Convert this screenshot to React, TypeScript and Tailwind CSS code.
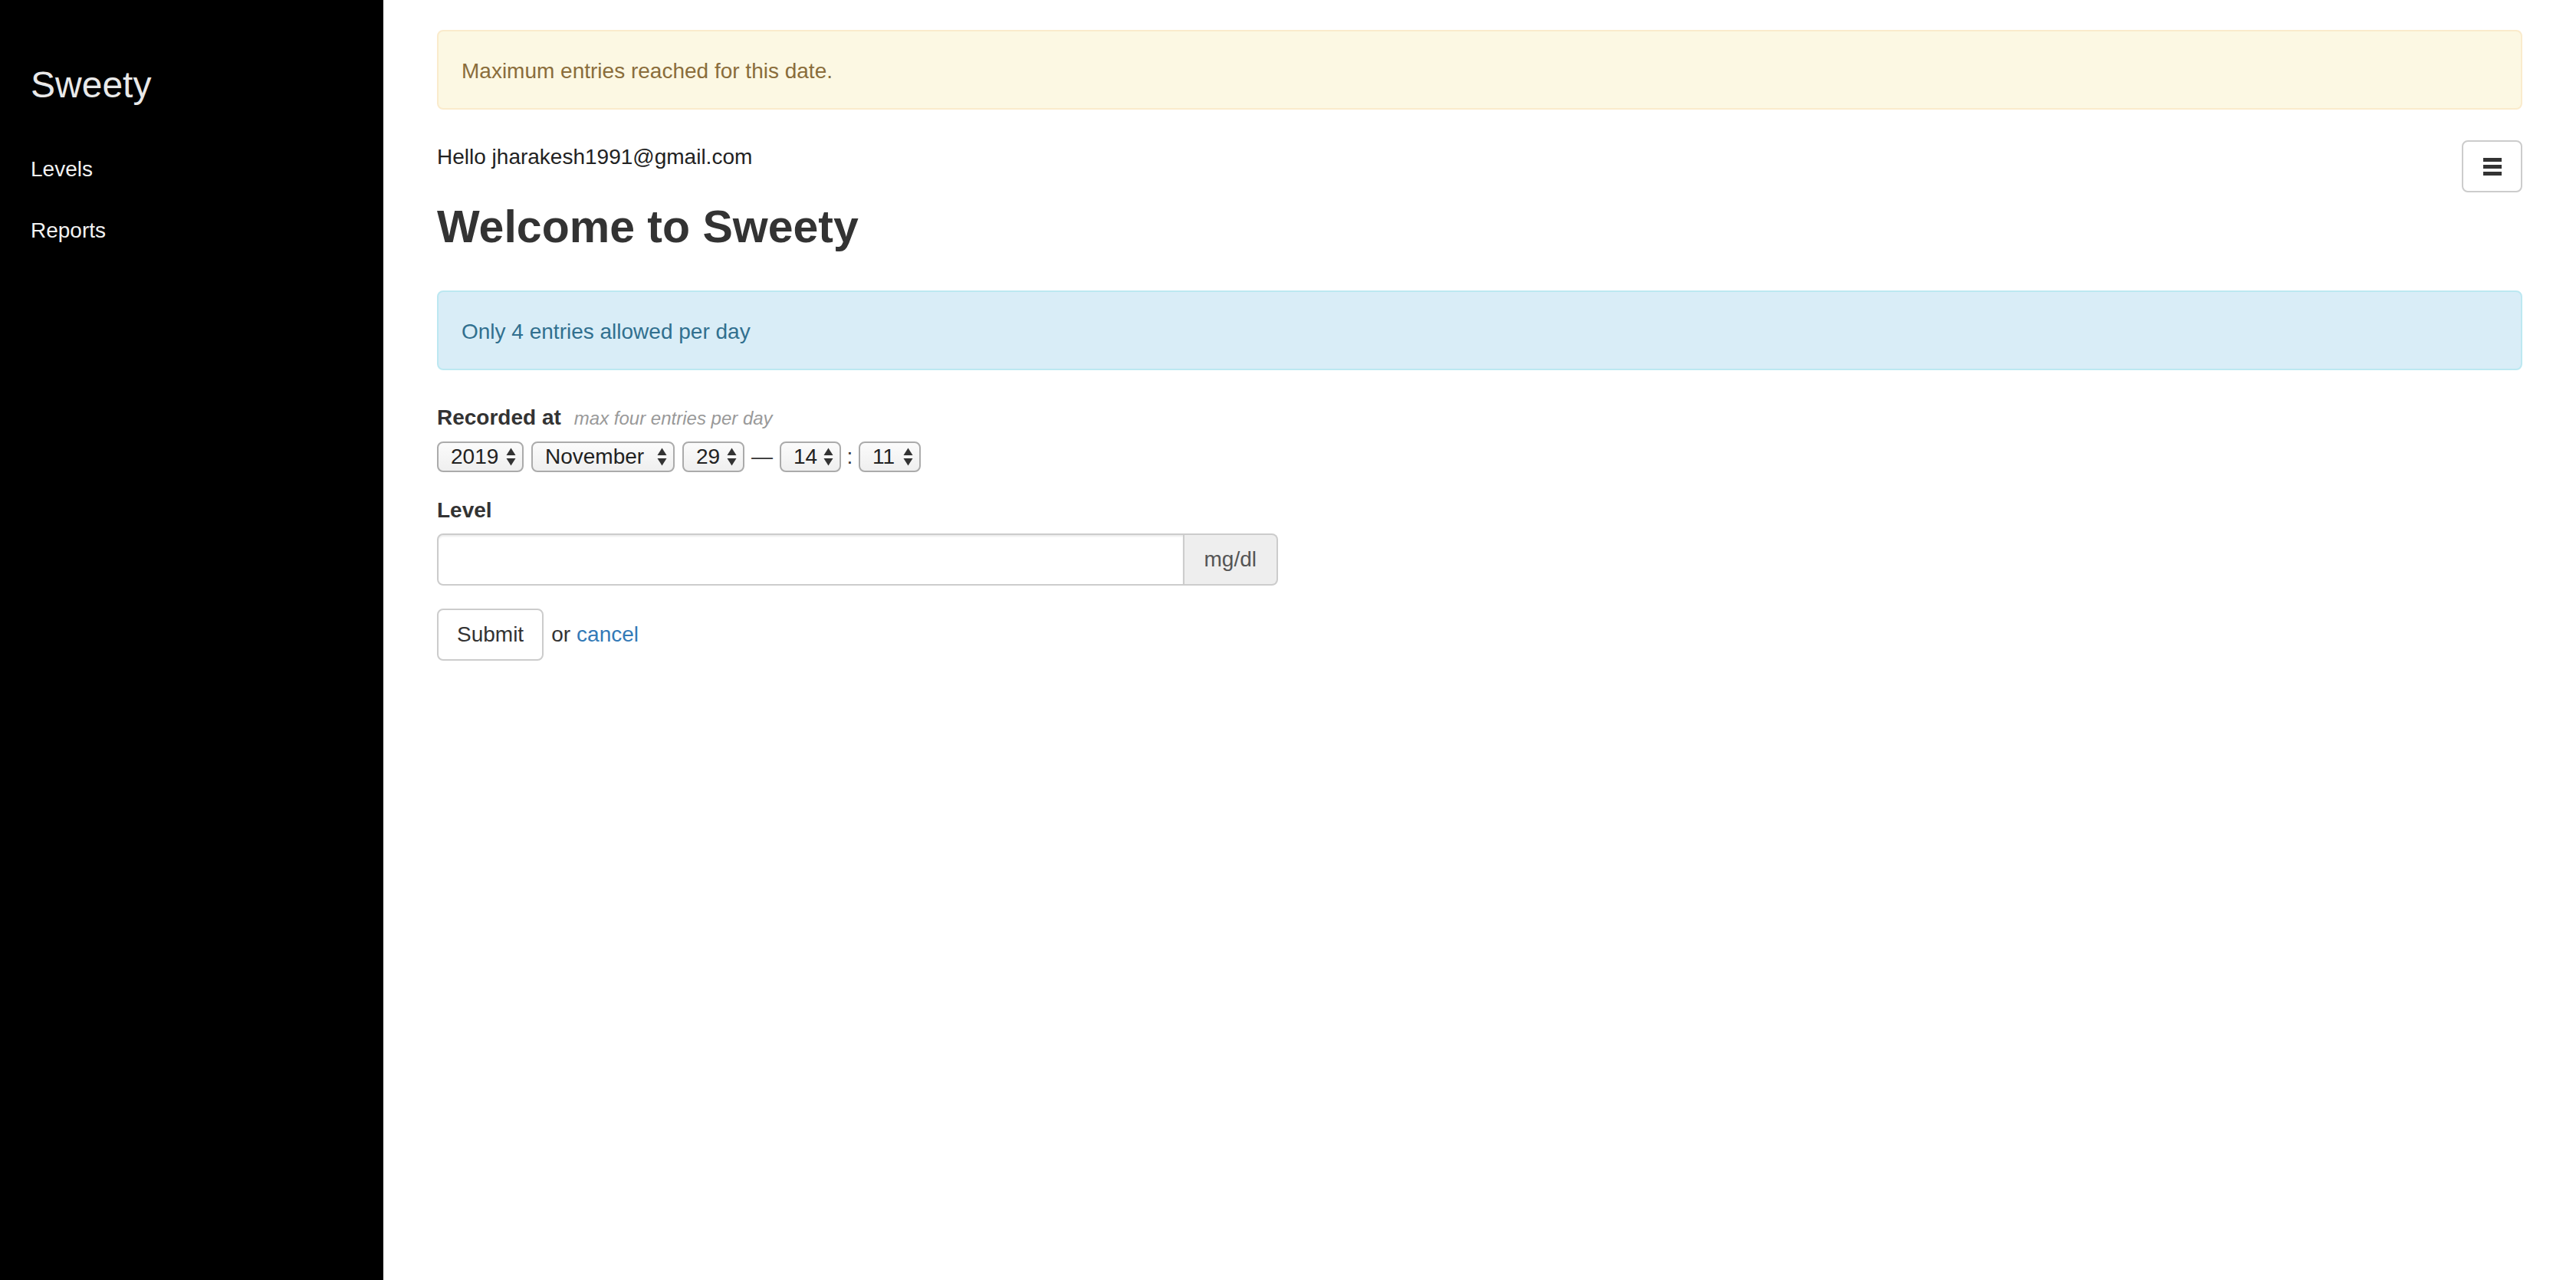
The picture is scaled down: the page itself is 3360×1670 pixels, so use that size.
import type { ReactNode } from 'react';

function Arrows() {
  return (
    <svg width="13" height="24" viewBox="0 0 13 24" className="shrink-0">
      <path d="M6.5 0.5 L12.5 10 L0.5 10 Z" fill="#333" />
      <path d="M0.5 14 L12.5 14 L6.5 23.5 Z" fill="#333" />
    </svg>
  );
}

function Picker({ value, className }: { value: string; className: string }) {
  return (
    <span
      className={`inline-flex h-[40px] shrink-0 items-center justify-between rounded-[8px] border-2 border-[#ababab] bg-gradient-to-b from-[#fbfbfb] to-[#efefef] pl-[16px] pr-[8px] text-[28px] leading-none text-[#222] ${className}`}
    >
      <span>{value}</span>
      <Arrows />
    </span>
  );
}

function Alert({ tone, children }: { tone: 'warning' | 'info'; children: ReactNode }) {
  const styles =
    tone === 'warning'
      ? 'border-[#faebcc] bg-[#fcf8e3] text-[#8a6d3b]'
      : 'border-[#bce8f1] bg-[#d9edf7] text-[#31708f]';
  return (
    <div className={`rounded-[8px] border-2 px-[30px] pb-[28px] pt-[32px] text-[28px] leading-[40px] ${styles}`}>
      {children}
    </div>
  );
}

export default function App() {
  return (
    <div className="flex h-screen font-['Liberation_Sans',Arial,sans-serif] text-[#333]">
      <aside className="w-[500px] shrink-0 bg-black px-[40px]">
        <div className="mt-[84px] text-[48px] leading-[54px] text-[#e9e9e9]">Sweety</div>
        <nav className="mt-[43px] flex flex-col">
          <a className="py-[20px] text-[28px] leading-[40px] text-[#f2f2f2]">Levels</a>
          <a className="py-[20px] text-[28px] leading-[40px] text-[#f2f2f2]">Reports</a>
        </nav>
      </aside>

      <main className="flex-1 px-[70px] pt-[39px]">
        <Alert tone="warning">Maximum entries reached for this date.</Alert>

        <div className="mt-[40px] flex items-start justify-between">
          <p className="pt-[2px] text-[28px] leading-[40px] text-[#222]">Hello jharakesh1991@gmail.com</p>
          <button
            type="button"
            className="flex h-[68px] w-[79px] flex-col items-center justify-center gap-[4px] rounded-[8px] border-2 border-[#ccc] bg-white"
            title="Menu"
          >
            <span className="h-[5px] w-[24px] bg-[#333]" />
            <span className="h-[5px] w-[24px] bg-[#333]" />
            <span className="h-[5px] w-[24px] bg-[#333]" />
          </button>
        </div>

        <h2 className="mt-[12px] text-[59px] font-bold leading-[66px] text-[#333]">Welcome to Sweety</h2>

        <div className="mt-[50px]">
          <Alert tone="info">Only 4 entries allowed per day</Alert>
        </div>

        <form className="mt-[42px]">
          <div className="mb-[30px]">
            <label className="block text-[28px] leading-[40px]">
              <span className="font-bold">Recorded at</span>
              <small className="ml-[17px] text-[24px] italic text-[#999]">max four entries per day</small>
            </label>
            <div className="mt-[10px] flex items-center">
              <Picker value="2019" className="w-[113px]" />
              <Picker value="November" className="ml-[10px] w-[187px]" />
              <Picker value="29" className="ml-[10px] w-[81px]" />
              <span className="w-[46px] text-center text-[28px] leading-none">—</span>
              <Picker value="14" className="w-[80px]" />
              <span className="w-[23px] text-center text-[28px] leading-none">:</span>
              <Picker value="11" className="w-[81px]" />
            </div>
          </div>

          <div className="mb-[30px]">
            <label className="block text-[28px] font-bold leading-[40px]">Level</label>
            <div className="mt-[10px] flex h-[68px] w-[1097px]">
              <input
                type="text"
                className="h-full flex-1 rounded-l-[8px] border-2 border-[#ccc] px-[24px] text-[28px] shadow-[inset_0_2px_2px_rgba(0,0,0,0.075)] outline-none"
              />
              <span className="flex h-full items-center rounded-r-[8px] border-2 border-l-0 border-[#ccc] bg-[#eee] px-[26px] text-[28px] text-[#555]">
                mg/dl
              </span>
            </div>
          </div>

          <div className="flex items-center text-[28px] leading-[40px]">
            <button
              type="button"
              className="h-[68px] rounded-[8px] border-2 border-[#ccc] bg-white px-[24px] text-[28px] text-[#333]"
            >
              Submit
            </button>
            <span className="ml-[10px]">or</span>
            <a className="ml-[8px] text-[#337ab7]">cancel</a>
          </div>
        </form>
      </main>
    </div>
  );
}
